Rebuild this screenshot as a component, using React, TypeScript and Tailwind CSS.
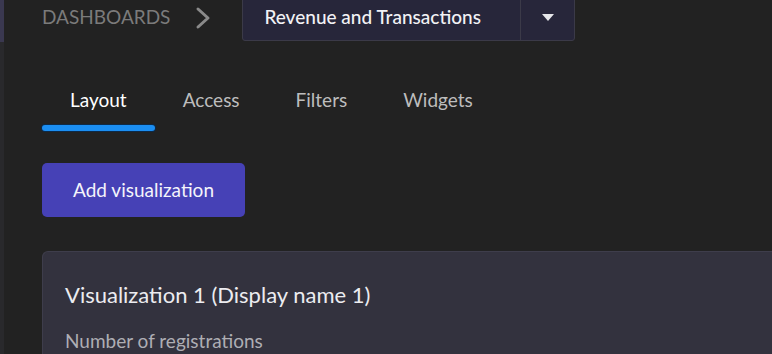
const tabs = ['Layout', 'Access', 'Filters', 'Widgets']

export default function App() {
  return (
    <div className="flex h-[354px] w-[772px] overflow-hidden bg-[#222222] text-white" style={{ fontFamily: 'Lato, "Noto Sans", sans-serif' }}>
      <div className="flex w-[4px] flex-col">
        <div className="h-[42px] bg-[#3a3850]" />
        <div className="flex-1 bg-[#29292c]" />
      </div>
      <main className="flex min-w-0 flex-1 flex-col pl-[38px]">
        <header className="flex h-[42px] items-stretch">
          <div className="flex items-center pb-[6px]">
            <span className="text-[19px] uppercase text-[#7b7b7b]">Dashboards</span>
            <svg className="ml-[25px] h-[24px] w-[16px] text-[#8a8a8a]" viewBox="0 0 16 24" fill="none" stroke="currentColor" strokeWidth={3} strokeLinecap="round" strokeLinejoin="round">
              <polyline points="3,3 13,12 3,21" />
            </svg>
          </div>
          <div className="ml-[31px] -mt-[10px] flex w-[333px] rounded-b-[3px] border border-[#3b3a48] bg-[#27263a]">
            <div className="flex flex-1 items-center border-r border-[#3b3a48] pl-[21px] pt-[8px] pb-[4px] text-[19px] font-medium text-[#f2f2f5]">
              Revenue and Transactions
            </div>
            <div className="flex w-[53px] items-center justify-center pt-[8px] pb-[4px]">
              <span className="h-0 w-0 border-x-[6px] border-t-[7px] border-x-transparent border-t-[#e6e6ea]" />
            </div>
          </div>
        </header>

        <nav className="mt-[46px] flex">
          {tabs.map((tab, i) => (
            <div key={tab} className="flex flex-col">
              <span className={`px-[28px] text-[19px] leading-[26px] ${i === 0 ? 'text-white' : 'text-[#bdbdbd]'}`}>{tab}</span>
              <span className={`mt-[12px] h-[6px] rounded-full ${i === 0 ? 'bg-[#1b8ef2] ring-1 ring-[#0d2a48]' : ''}`} />
            </div>
          ))}
        </nav>

        <div className="mt-[32px]">
          <button className="h-[54px] w-[203px] rounded-[5px] bg-[#4641b6] text-[19px] text-[#f4f4fb]">Add visualization</button>
        </div>

        <section className="mt-[34px] flex-1 rounded-tl-[6px] border-l border-t border-[#3e3d4b] bg-[#33323e] pl-[22px] pt-[28px]">
          <h2 className="text-[22px] leading-[30px] text-[#ececf0]">Visualization 1 (Display name 1)</h2>
          <p className="mt-[18px] text-[19px] leading-[26px] text-[#aeaeb4]">Number of registrations</p>
        </section>
      </main>
    </div>
  )
}
